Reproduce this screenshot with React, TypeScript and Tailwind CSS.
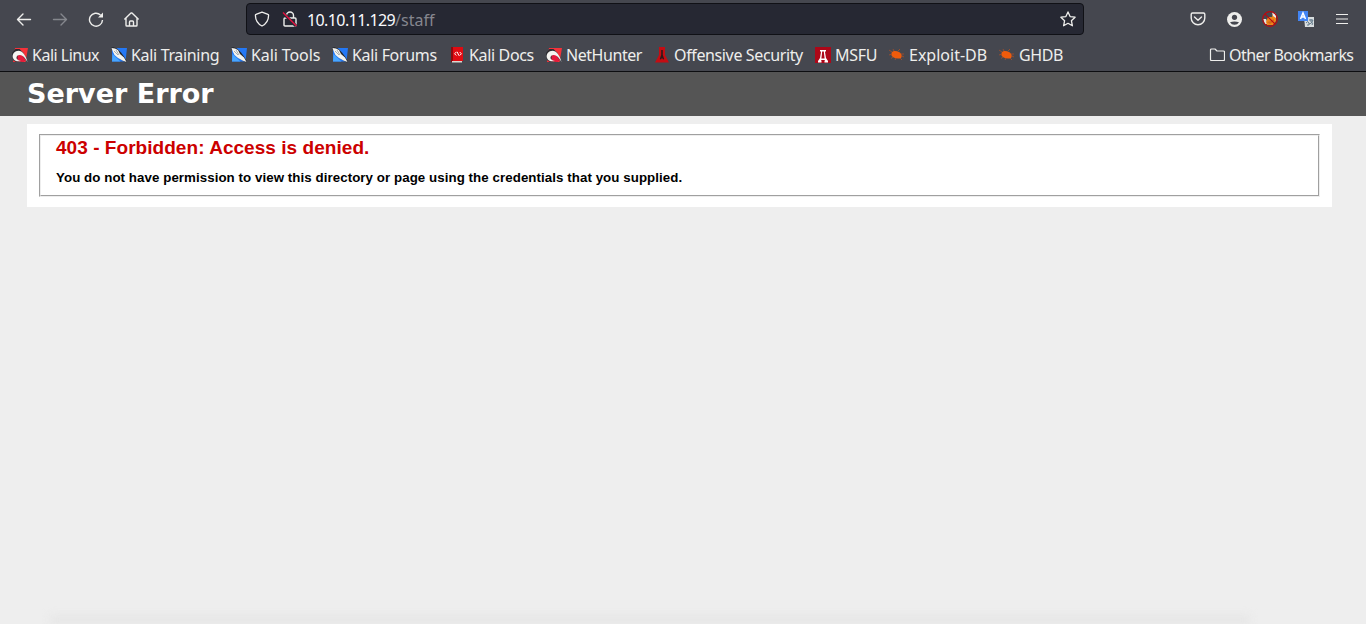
import type { ReactNode } from 'react';

function Kali({ blue = false }: { blue?: boolean }) {
  return (
    <svg className="size-4 shrink-0" viewBox="0 0 16 16">
      {blue ? (
        <>
          <path d="M1 1h15l-1.5 13.5H1z" fill="#2478f5" />
          <path d="M1.5 7l8 7.5H1z" fill="#48a6ff" />
          <path d="M0 1l2-1 4 1.5 4 4 3 4 3 5-1 1-7-4-4-5z" fill="#25272c" />
          <path d="M.5 1l3.5.5L7 3l2 4 4 3.5 2.5 4.5-4-1.5L7 11 3.5 8 2 5z" fill="#f4f4f0" />
          <path d="M3 4l4 4M5 3l3 5" stroke="#777c80" strokeWidth=".6" />
        </>
      ) : (
        <>
          <path d="M3 1h13l-2.5 14H1z" fill="#f5323a" />
          <path d="M0 6l3.5-4 4 0 4 4 2.5 6-2 2-8 1-3-2z" fill="#2b2b30" />
          <path d="M5.5 8.5l4-1 4 5-2 2.5-6-1.5z" fill="#e51a3c" />
          <path d="M15.5 15C13.5 8 10.5 3.7 6.5 3.7 2.8 3.7 0 7 .8 10.5c.8 3.5 5 4.5 8.2 3.5-3-.5-5-1.8-4.4-3.9.6-2.2 3.6-2.6 6-1.1 1.9 1.2 3.2 3.3 4.9 6z" fill="#f5f4f1" />
        </>
      )}
    </svg>
  );
}

function Docs() {
  return (
    <svg className="size-4 shrink-0" viewBox="0 0 16 16">
      <path d="M2 0h12v14H2z" fill="#e00b12" />
      <path d="M2 0h2v15H2z" fill="#8f0a0e" />
      <path d="M3 14h10v1.5H3z" fill="#dcd8d1" />
      <path d="M7.3 5L5.6 6.8l1.7 1.7m3.4-3.5l1.7 1.8-1.7 1.7M8 4.7l2 4" stroke="#fff" strokeWidth="1" fill="none" />
    </svg>
  );
}

function Security() {
  return (
    <svg className="size-4 shrink-0" viewBox="0 0 16 16">
      <path d="M5 0h6v8l4 7.5H1L5 8z" fill="#c40d13" />
      <path d="M7.2 3h1.6v5l1.4 4-1 .5L8 11l-1.2 1.5-1-.5L7.2 8z" fill="#30191b" />
    </svg>
  );
}

function Msfu() {
  return (
    <svg className="size-4 shrink-0" viewBox="0 0 16 16">
      <path d="M0 0h16v16H0z" fill="#ad0718" />
      <path d="M5 3h6v1l-1 1 1 6 2 3v1.5H9.5V14l.5-1H6l.5 1v1.5H3V14l2-3 1-6-1-1z" fill="#fff" />
      <path d="M7.2 4.5h1.6l.8 7H6.4z" fill="#ad0718" />
    </svg>
  );
}

function Bug() {
  return (
    <svg className="size-4 shrink-0" viewBox="0 0 16 16">
      <path d="M2.5 6c1-2.5 5-2.5 7.5-1 2.5 1.3 3.5 4 2 6-3.5 1.5-8 0-9.5-2.5z" fill="#f05b0b" />
      <path d="M3 5L0 3m5 1L4 2m5 2l2-2m1 5l3 0M3 7L0 8m4 2l-2 1.5m5-.5l-1 2m5-2l2 2m0-4l2 1" stroke="#a94f28" strokeWidth=".8" fill="none" />
    </svg>
  );
}

const bookmarks: { label: string; icon: ReactNode; width: string }[] = [
  { label: 'Kali Linux', icon: <Kali />, width: 'w-[67px] tracking-[-0.5px]' },
  { label: 'Kali Training', icon: <Kali blue />, width: 'w-[88px] tracking-[-0.33px]' },
  { label: 'Kali Tools', icon: <Kali blue />, width: 'w-[69px] tracking-[-0.1px]' },
  { label: 'Kali Forums', icon: <Kali blue />, width: 'w-[85px] tracking-[-0.33px]' },
  { label: 'Kali Docs', icon: <Docs />, width: 'w-[65px] tracking-[-0.35px]' },
  { label: 'NetHunter', icon: <Kali />, width: 'w-[76px] tracking-[-0.45px]' },
  { label: 'Offensive Security', icon: <Security />, width: 'w-[129px] tracking-[-0.37px]' },
  { label: 'MSFU', icon: <Msfu />, width: 'w-[42px] tracking-[-0.25px]' },
  { label: 'Exploit-DB', icon: <Bug />, width: 'w-[78px]' },
  { label: 'GHDB', icon: <Bug />, width: 'w-[45px] tracking-[-0.4px]' },
];

function Toolbar() {
  const line = 'size-4 shrink-0 fill-none stroke-current';
  return (
    <div className="flex h-[38px] items-center text-[#eeeeec]">
      <div className="flex w-[246px] shrink-0 items-center gap-5 pl-4">
        <svg className={line} viewBox="0 0 16 16" strokeWidth="1.4" strokeLinecap="round" strokeLinejoin="round"><path d="M14.5 8.5h-13M7 3L1.5 8.5 7 14" /></svg>
        <svg className="size-4 shrink-0 fill-none stroke-[#85878d]" viewBox="0 0 16 16" strokeWidth="1.4" strokeLinecap="round" strokeLinejoin="round"><path d="M1.5 8.5h13M9 3l5.5 5.5L9 14" /></svg>
        <svg className={line} viewBox="0 0 16 16" strokeWidth="1.4"><path d="M12.5 4A6.5 6.5 0 1 0 14.5 9" /><path d="M15 1.5v5h-5z" fill="currentColor" stroke="none" /></svg>
        <svg className={line} viewBox="0 0 16 16" strokeWidth="1.4" strokeLinecap="round" strokeLinejoin="round"><path d="M.8 8L7 2h1l6.2 6M2 7v7.2q0 .8.8.8h9.4q.8 0 .8-.8V7M5.5 15v-4q0-1 1-1h2q1 0 1 1v4" /></svg>
      </div>
      <div className="flex h-8 w-[838px] items-center rounded-[4px] border border-[#101116] bg-[#262833] px-[7px]">
        <svg className={line} viewBox="0 0 16 16" strokeWidth="1.3" strokeLinejoin="round"><path d="M8 1.2l6 2.2q.6.2.6.8C14.5 9.5 12 13 8 15 4 13 1.5 9.5 1.4 4.2q0-.6.6-.8z" /></svg>
        <svg className="ml-3 size-4 shrink-0 fill-none stroke-current" viewBox="0 0 16 16" strokeWidth="1.4" strokeLinejoin="round"><path d="M4.5 7V4.5a3.5 3.5 0 0 1 7 0V7M3 7h10q1 0 1 1v6q0 1-1 1H3q-1 0-1-1V8q0-1 1-1z" /><path d="M1 2l13 13" stroke="#262833" strokeWidth="3" /><path d="M1 1.5L14.5 15" stroke="#e4103f" /></svg>
        <span className="ml-[9px] w-32 pt-0.5 text-base leading-6 whitespace-nowrap text-[#fbfbfe]"><span className="tracking-[-0.6px]">10.10.11.129</span><span className="text-[#85868e]">/staff</span></span>
        <svg className="ml-auto size-4 shrink-0 fill-none stroke-current" viewBox="0 0 16 16" strokeWidth="1.3" strokeLinejoin="round"><path d="M8 .9l2.1 4.7 5 .6-3.7 3.5 1 5.1L8 12.3l-4.4 2.5 1-5.1L.9 6.2l5-.6z" /></svg>
      </div>
      <div className="ml-auto flex items-center gap-5 pr-4">
        <svg className={line} viewBox="0 0 16 16" strokeWidth="1.4" strokeLinecap="round" strokeLinejoin="round"><path d="M2.5 2h11q1.3 0 1.3 1.3V7a6.8 6.8 0 0 1-13.6 0V3.3Q1.2 2 2.5 2zM4.5 6L8 9.2 11.5 6" /></svg>
        <svg className="size-4 shrink-0" viewBox="0 0 16 16"><circle cx="8.5" cy="8.5" r="7.5" fill="#eeeeec" /><circle cx="8.5" cy="6.3" r="2.6" fill="#45474f" /><path d="M4 11.3q4.5-1.8 9 0-1.5 2.5-4.5 2.5T4 11.3" fill="#45474f" /></svg>
        <svg className="size-4 shrink-0" viewBox="0 0 16 16"><path d="M1 8l3 0 2 5-3 0z" fill="#e7e3dc" /><path d="M11 2l3 3 0 5-3 4-6 0-1-3 2-5 4 0z" fill="#ee8419" /><path d="M10 1l4 2v4l-3-2z" fill="#eee" /><path d="M5 11l4-1 3-2v2l-4 3z" fill="#d2691a" /><circle cx="8" cy="8" r="7.3" fill="none" stroke="#b90910" strokeWidth="1.2" /><path d="M3 3l10 10" stroke="#b90910" strokeWidth="1.1" /></svg>
        <svg className="size-4 shrink-0" viewBox="0 0 16 16"><path d="M6 6h10v10H7z" fill="#d8dddf" /><path d="M0 0h10v10H0z" fill="#4285f4" /><path d="M2.5 8L5 2l2.5 6M3.4 6h3.2" fill="none" stroke="#fff" strokeWidth="1.5" /><path d="M8 12q2-3 3 0t-2 2m2-5h4m-2-1v3q3 1 1 3m1-5q-1 4-4 4" fill="none" stroke="#61798a" /></svg>
        <svg className={line} viewBox="0 0 16 16" strokeWidth="1.2"><path d="M2 3.5h12M2 8h12M2 12.5h12" /></svg>
      </div>
    </div>
  );
}

export default function App() {
  return (
    <div className="flex h-[624px] flex-col overflow-hidden bg-[#eeeeee]">
      <header className="h-[72px] shrink-0 border-b border-[#0d0e11] bg-[#45474f] font-['Noto_Sans',sans-serif]">
        <Toolbar />
        <nav className="flex h-[33px] items-center gap-3 pr-3 pl-3 text-base text-[#eeeeec]">
          {bookmarks.map((item) => (
            <div className="flex items-center gap-1 whitespace-nowrap" key={item.label}>
              {item.icon}
              <span className={item.width}>{item.label}</span>
            </div>
          ))}
          <div className="ml-auto flex items-center gap-1 whitespace-nowrap">
            <svg className="size-4 shrink-0" viewBox="0 0 16 16" fill="none" stroke="currentColor" strokeWidth="1.2" strokeLinejoin="round"><path d="M1.5 3q0-1 1-1H6l2 2h6.5q1 0 1 1v7.5q0 1-1 1h-12q-1 0-1-1z" /></svg>
            <span className="w-[125px] tracking-[-0.57px]">Other Bookmarks</span>
          </div>
        </nav>
      </header>
      <div className="flex h-11 shrink-0 items-center bg-[#555555] pl-[27px]">
        <h1 className="font-['DejaVu_Sans',sans-serif] text-[27px] leading-8 font-bold text-white">Server Error</h1>
      </div>
      <main className="mt-2 mr-[34px] ml-[27px] h-[83px] shrink-0 bg-white pt-[10px] pr-3 pl-3 font-['Liberation_Sans',sans-serif]">
        <div className="h-[63px] border border-t-[#a0a0a0] border-r-[#eeeeee] border-b-[#eeeeee] border-l-[#a0a0a0]">
          <div className="h-full border border-t-[#eeeeee] border-r-[#a0a0a0] border-b-[#a0a0a0] border-l-[#eeeeee] pt-px pl-[15px]">
            <h2 className="text-[19px] leading-[22px] font-bold tracking-[0.045px] text-[#cc0000]">403 - Forbidden: Access is denied.</h2>
            <h3 className="mt-[11px] text-[13.3px] leading-4 font-bold tracking-[0.067px] text-black">You do not have permission to view this directory or page using the credentials that you supplied.</h3>
          </div>
        </div>
      </main>
      <div className="mt-auto mr-[116px] ml-[50px] h-2 shrink-0 bg-[#e5e5e5] blur-[4px]" />
    </div>
  );
}
